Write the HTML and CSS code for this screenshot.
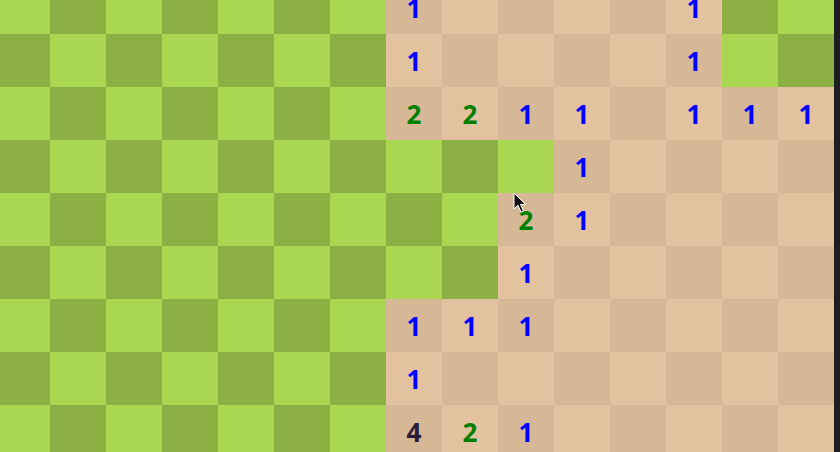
FILE: index.html
```html
<!DOCTYPE html>
<html>
<head>
<meta charset="utf-8">
<link rel="stylesheet" href="styles.css">
</head>
<body>
<div class="board">
<!-- row 0 -->
<div class="c u"></div><div class="c u"></div><div class="c u"></div><div class="c u"></div><div class="c u"></div><div class="c u"></div><div class="c u"></div><div class="c r n1">1</div><div class="c r"></div><div class="c r"></div><div class="c r"></div><div class="c r"></div><div class="c r n1">1</div><div class="c u"></div><div class="c u"></div>
<!-- row 1 -->
<div class="c u"></div><div class="c u"></div><div class="c u"></div><div class="c u"></div><div class="c u"></div><div class="c u"></div><div class="c u"></div><div class="c r n1">1</div><div class="c r"></div><div class="c r"></div><div class="c r"></div><div class="c r"></div><div class="c r n1">1</div><div class="c u"></div><div class="c u"></div>
<!-- row 2 -->
<div class="c u"></div><div class="c u"></div><div class="c u"></div><div class="c u"></div><div class="c u"></div><div class="c u"></div><div class="c u"></div><div class="c r n2">2</div><div class="c r n2">2</div><div class="c r n1">1</div><div class="c r n1">1</div><div class="c r"></div><div class="c r n1">1</div><div class="c r n1">1</div><div class="c r n1">1</div>
<!-- row 3 -->
<div class="c u"></div><div class="c u"></div><div class="c u"></div><div class="c u"></div><div class="c u"></div><div class="c u"></div><div class="c u"></div><div class="c u"></div><div class="c u"></div><div class="c u"></div><div class="c r n1">1</div><div class="c r"></div><div class="c r"></div><div class="c r"></div><div class="c r"></div>
<!-- row 4 -->
<div class="c u"></div><div class="c u"></div><div class="c u"></div><div class="c u"></div><div class="c u"></div><div class="c u"></div><div class="c u"></div><div class="c u"></div><div class="c u"></div><div class="c r n2">2</div><div class="c r n1">1</div><div class="c r"></div><div class="c r"></div><div class="c r"></div><div class="c r"></div>
<!-- row 5 -->
<div class="c u"></div><div class="c u"></div><div class="c u"></div><div class="c u"></div><div class="c u"></div><div class="c u"></div><div class="c u"></div><div class="c u"></div><div class="c u"></div><div class="c r n1">1</div><div class="c r"></div><div class="c r"></div><div class="c r"></div><div class="c r"></div><div class="c r"></div>
<!-- row 6 -->
<div class="c u"></div><div class="c u"></div><div class="c u"></div><div class="c u"></div><div class="c u"></div><div class="c u"></div><div class="c u"></div><div class="c r n1">1</div><div class="c r n1">1</div><div class="c r n1">1</div><div class="c r"></div><div class="c r"></div><div class="c r"></div><div class="c r"></div><div class="c r"></div>
<!-- row 7 -->
<div class="c u"></div><div class="c u"></div><div class="c u"></div><div class="c u"></div><div class="c u"></div><div class="c u"></div><div class="c u"></div><div class="c r n1">1</div><div class="c r"></div><div class="c r"></div><div class="c r"></div><div class="c r"></div><div class="c r"></div><div class="c r"></div><div class="c r"></div>
<!-- row 8 -->
<div class="c u"></div><div class="c u"></div><div class="c u"></div><div class="c u"></div><div class="c u"></div><div class="c u"></div><div class="c u"></div><div class="c r n4">4</div><div class="c r n2">2</div><div class="c r n1">1</div><div class="c r"></div><div class="c r"></div><div class="c r"></div><div class="c r"></div><div class="c r"></div>
</div>
<svg class="cursor" width="14" height="22" viewBox="0 0 14 22" xmlns="http://www.w3.org/2000/svg">
  <path d="M1,1 L1,17 L5,13.2 L8,20 L10.4,19 L7.5,12.4 L12.6,12.4 Z" fill="#111" stroke="#fff" stroke-width="1" stroke-linejoin="round"/>
</svg>
</body>
</html>
```
FILE: styles.css
```css
html, body {
  margin: 0;
  padding: 0;
  background: #1d1e20;
  width: 840px;
  height: 452px;
  overflow: hidden;
}
.board {
  display: grid;
  grid-template-columns: repeat(15, 56px);
  grid-auto-rows: 53px;
  margin-left: -6px;
  margin-top: -19px;
  width: 840px;
}
.c {
  display: flex;
  align-items: center;
  justify-content: center;
  font-family: "Noto Sans", "Open Sans", sans-serif;
  font-weight: 700;
  font-size: 26px;
  line-height: 1;
}
.c.u:nth-child(odd) { background: #aad751; }
.c.u:nth-child(even) { background: #8cb043; }
.c.r:nth-child(odd) { background: #e3c29f; }
.c.r:nth-child(even) { background: #d6b897; }
.n1 { color: #0000ff; }
.n2 { color: #008000; }
.n4 { color: #2b1a3a; }
.cursor {
  position: absolute;
  left: 513px;
  top: 192px;
}
```
